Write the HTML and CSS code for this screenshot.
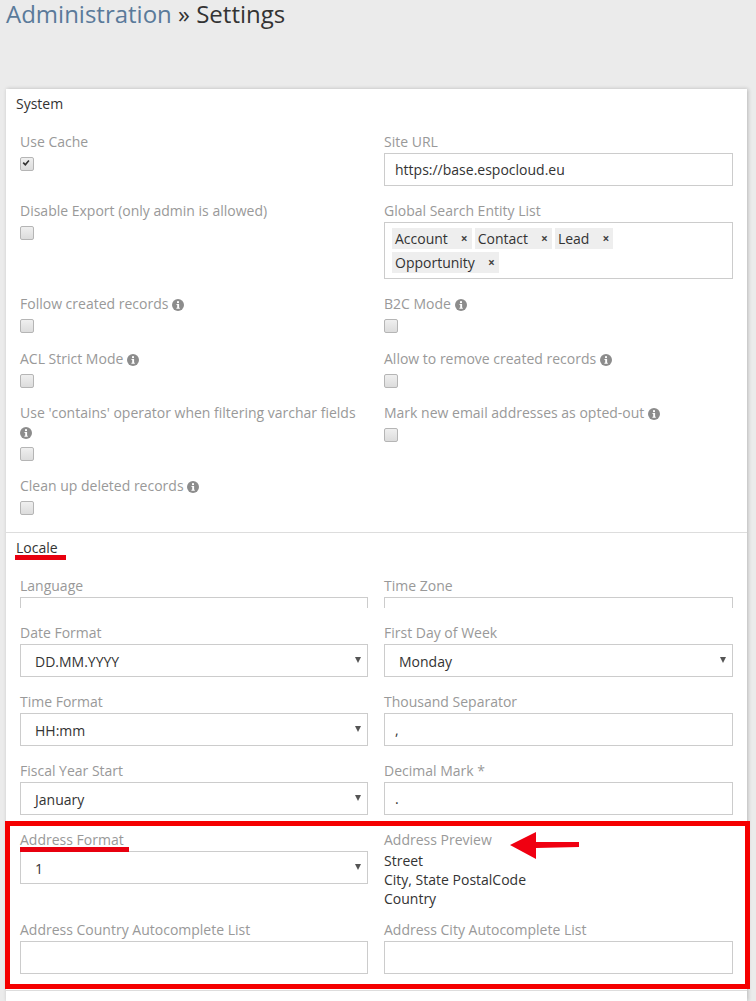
FILE: index.html
```html
<!DOCTYPE html>
<html lang="en">
<head>
<meta charset="utf-8">
<title>Administration » Settings</title>
<link rel="stylesheet" href="styles.css">
</head>
<body>
<svg width="0" height="0" class="defs" aria-hidden="true">
  <symbol id="info" viewBox="0 0 12 12">
    <circle cx="6" cy="6" r="6" fill="#8c8c8c"/>
    <rect x="5" y="2.2" width="2" height="1.9" fill="#fff"/>
    <path d="M4.5 5h2.6v3.8h.7v1H4.4v-1h.8V6h-.7z" fill="#fff"/>
  </symbol>
</svg>
<h1 class="title"><a class="crumb">Administration</a> » Settings</h1>
<main class="panel">
  <section class="section">
    <h2 class="section-head">System</h2>
    <div class="grid">
      <div class="cell"><label class="label">Use Cache</label><span class="check"><svg viewBox="0 0 12 12" width="12" height="12"><path d="M2.6 6.2l1.2-1.2 1.5 1.6 3-3.7 1.2 1-4.1 5.2z" fill="#333"/></svg></span></div>
      <div class="cell"><label class="label">Site URL</label><input class="input" type="text" value="https://base.espocloud.eu"></div>
      <div class="cell"><label class="label">Disable Export (only admin is allowed)</label><span class="check"></span></div>
      <div class="cell"><label class="label">Global Search Entity List</label>
        <div class="tags">
          <span class="tag">Account<i class="x">×</i></span>
          <span class="tag">Contact<i class="x">×</i></span>
          <span class="tag">Lead<i class="x">×</i></span>
          <span class="tag">Opportunity<i class="x">×</i></span>
        </div>
      </div>
      <div class="cell"><label class="label">Follow created records <svg class="info"><use href="#info"/></svg></label><span class="check"></span></div>
      <div class="cell"><label class="label">B2C Mode <svg class="info"><use href="#info"/></svg></label><span class="check"></span></div>
      <div class="cell"><label class="label">ACL Strict Mode <svg class="info"><use href="#info"/></svg></label><span class="check"></span></div>
      <div class="cell"><label class="label">Allow to remove created records <svg class="info"><use href="#info"/></svg></label><span class="check"></span></div>
      <div class="cell cell-wrap"><label class="label">Use 'contains' operator when filtering varchar fields <svg class="info"><use href="#info"/></svg></label><span class="check"></span></div>
      <div class="cell cell-wrap"><label class="label">Mark new email addresses as opted-out <svg class="info"><use href="#info"/></svg></label><span class="check"></span></div>
      <div class="cell"><label class="label">Clean up deleted records <svg class="info"><use href="#info"/></svg></label><span class="check"></span></div>
    </div>
  </section>
  <section class="section">
    <h2 class="section-head">Locale</h2>
    <div class="grid">
      <div class="cell"><label class="label">Language</label><div class="clipped"></div></div>
      <div class="cell"><label class="label">Time Zone</label><div class="clipped"></div></div>
      <div class="cell"><label class="label">Date Format</label><div class="select-wrap"><select class="select"><option>DD.MM.YYYY</option></select></div></div>
      <div class="cell"><label class="label">First Day of Week</label><div class="select-wrap"><select class="select"><option>Monday</option></select></div></div>
      <div class="cell"><label class="label">Time Format</label><div class="select-wrap"><select class="select"><option>HH:mm</option></select></div></div>
      <div class="cell"><label class="label">Thousand Separator</label><input class="input" type="text" value=","></div>
      <div class="cell"><label class="label">Fiscal Year Start</label><div class="select-wrap"><select class="select"><option>January</option></select></div></div>
      <div class="cell"><label class="label">Decimal Mark *</label><input class="input" type="text" value="."></div>
      <div class="cell cell-tight"><label class="label">Address Format</label><div class="select-wrap"><select class="select"><option>1</option></select></div></div>
      <div class="cell cell-tight"><label class="label">Address Preview</label><div class="preview">Street<br>City, State PostalCode<br>Country</div></div>
      <div class="cell"><label class="label">Address Country Autocomplete List</label><input class="input" type="text"></div>
      <div class="cell"><label class="label">Address City Autocomplete List</label><input class="input" type="text"></div>
    </div>
  </section>
</main>
<svg class="annotations" width="756" height="1001" viewBox="0 0 756 1001" aria-hidden="true">
  <rect x="7.5" y="823.5" width="740" height="163" fill="none" stroke="#f50000" stroke-width="5"/>
  <rect x="15" y="555" width="51" height="5" fill="#e8000f"/>
  <rect x="20" y="847" width="109" height="5" fill="#e8000f"/>
  <path d="M510 845 536 832 536 842 579 842 579 847 536 848 536 859z" fill="#f00011"/>
</svg>
</body>
</html>
```
FILE: styles.css
```css
* { box-sizing: border-box; }
html, body { margin: 0; height: 1001px; overflow: hidden; }
body {
  position: relative;
  display: flex;
  flex-direction: column;
  padding: 0 9px 0 6px;
  background: #ebebeb;
  color: #333;
  font: 14px/19px "Open Sans", sans-serif;
}
.defs { position: absolute; }
.title {
  margin: 0 0 61px;
  height: 28px;
  font-size: 24px;
  line-height: 28px;
  font-weight: 400;
  color: #333;
}
.crumb { color: #5a7a9a; }
.panel {
  flex: 1;
  background: #fff;
  box-shadow: 1px 0 4px rgba(0, 0, 0, .22);
}
.section { border-bottom: 1px solid #ddd; padding-bottom: 2px; }
.section + .section { padding-bottom: 1px; }
.section-head {
  margin: 0;
  height: 43px;
  padding: 5px 10px 0;
  font-size: 14px;
  line-height: 19px;
  font-weight: 400;
}
.grid {
  display: grid;
  grid-template-columns: 348px 349px;
  column-gap: 16px;
  padding: 0 14px;
}
.cell { padding-bottom: 15px; min-width: 0; }
.cell-tight { padding-bottom: 12px; }
.cell-wrap { padding-bottom: 14px; }
.label {
  display: block;
  margin-bottom: 2px;
  color: #999;
}
.info { width: 12px; height: 12px; vertical-align: -2px; }
.check {
  display: block;
  width: 12px;
  height: 18.5px;
  position: relative;
}
.check::before {
  content: "";
  display: block;
  position: absolute;
  left: 0;
  top: 4px;
  width: 12px;
  height: 12px;
  border: 1px solid #b5b5b5;
  border-radius: 2px;
  background: linear-gradient(#efefef, #dcdcdc);
}
.check svg { position: absolute; left: 0; top: 4px; }
.input, .select {
  display: block;
  width: 100%;
  height: 33px;
  border: 1px solid #ccc;
  border-radius: 0;
  background: #fff;
  color: #333;
  font: 14px/19px "Open Sans", sans-serif;
  outline: 0;
}
.input { padding: 6px 10px; }
.select { padding: 7px 10px 5px; appearance: none; -webkit-appearance: none; text-indent: 4px; }
.select-wrap { position: relative; }
.select-wrap::after {
  content: "";
  position: absolute;
  right: 7px;
  top: 13px;
  border-left: 3px solid transparent;
  border-right: 3px solid transparent;
  border-top: 6px solid #555;
}
.tags {
  display: flex;
  flex-wrap: wrap;
  align-content: flex-start;
  gap: 3px;
  height: 57px;
  padding: 5px 12px 5px 7px;
  border: 1px solid #ccc;
}
.tag {
  display: flex;
  align-items: center;
  height: 21px;
  padding: 0 3px;
  background: #eee;
  color: #333;
}
.x {
  margin-left: 13px;
  margin-right: 1px;
  font-style: normal;
  font-weight: 700;
  font-size: 12px;
  color: #444;
}
.clipped {
  height: 11px;
  border: 1px solid #ccc;
  border-bottom: 0;
}
.preview { height: 57px; color: #333; }
.annotations { position: absolute; left: 0; top: 0; pointer-events: none; }
```
